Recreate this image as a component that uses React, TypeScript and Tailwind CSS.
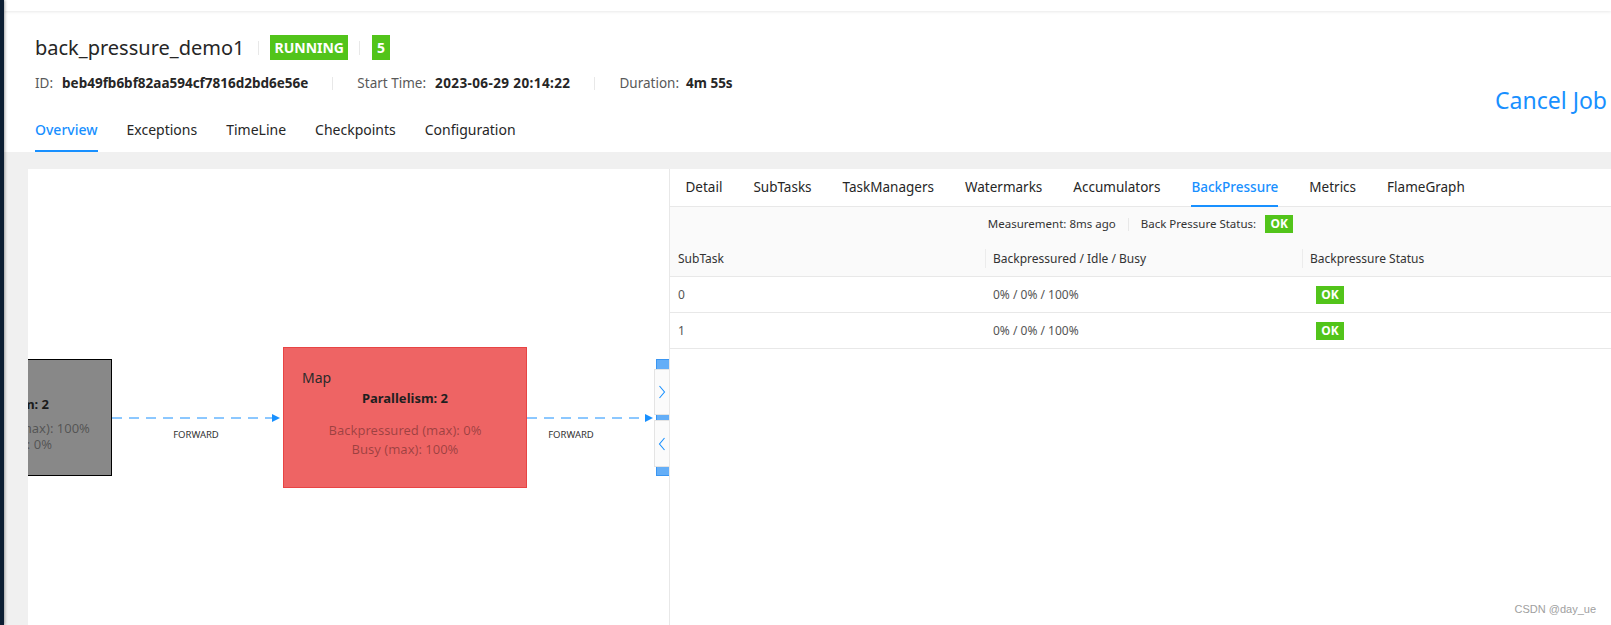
import React from 'react';

const jobTabs = ['Overview', 'Exceptions', 'TimeLine', 'Checkpoints', 'Configuration'];
const vertexTabs = ['Detail', 'SubTasks', 'TaskManagers', 'Watermarks', 'Accumulators', 'BackPressure', 'Metrics', 'FlameGraph'];
const subtasks = [
  { id: 0, ratio: '0% / 0% / 100%', status: 'OK' },
  { id: 1, ratio: '0% / 0% / 100%', status: 'OK' },
];

const Divider = ({ className = '' }: { className?: string }) => (
  <span className={`inline-block w-px shrink-0 bg-[#e8e8e8] ${className}`} />
);

const OkTag = ({ className = '' }: { className?: string }) => (
  <span className={`inline-flex items-center justify-center w-[28px] h-[18px] bg-[#52c41a] text-white text-[12px] font-bold leading-none ${className}`}>
    OK
  </span>
);

function JobHeader() {
  return (
    <div className="bg-white pl-[31px] pr-[4px]">
      <div className="flex justify-between h-[82px]">
        <div className="pt-[24px]">
          {/* title + status */}
          <div className="flex items-center h-[25px]">
            <h1 className="text-[20px] leading-[25px] font-normal text-[#262626]">back_pressure_demo1</h1>
            <Divider className="h-[14px] ml-[14px] mr-[11px]" />
            <span className="h-[25px] px-[4px] bg-[#52c41a] text-white text-[14px] font-bold leading-[25px]">RUNNING</span>
            <Divider className="h-[14px] ml-[11px] mr-[12px]" />
            <span className="h-[25px] w-[18px] bg-[#52c41a] text-white text-[14px] font-bold leading-[25px] text-center">5</span>
          </div>

          {/* id / time / duration */}
          <div className="mt-[13px] flex items-center h-[20px] text-[13.5px] leading-[20px]">
            <span className="text-[#595959]">ID:</span>
            <span className="ml-[9px] font-bold text-[#262626]">beb49fb6bf82aa594cf7816d2bd6e56e</span>
            <Divider className="h-[13px] mx-[24px]" />
            <span className="text-[#595959]">Start Time:</span>
            <span className="ml-[9px] font-bold text-[#262626] tracking-[0.4px]">2023-06-29 20:14:22</span>
            <Divider className="h-[13px] mx-[24px]" />
            <span className="text-[#595959]">Duration:</span>
            <span className="ml-[7px] font-bold text-[#262626]">4m 55s</span>
          </div>
        </div>
        <button className="self-start shrink-0 mt-[74px] text-[23px] leading-[30px] text-[#1890ff]">Cancel Job</button>
      </div>

      <nav className="mt-[14px] flex gap-[29px] h-[45px]">
        {jobTabs.map((t, i) => (
          <div
            key={t}
            className={`relative flex items-center h-full text-[14px] ${i === 0 ? 'text-[#1890ff] font-medium' : 'text-[#262626]'}`}
          >
            {t}
            {i === 0 && <span className="absolute left-0 right-0 bottom-0 h-[2px] bg-[#1890ff]" />}
          </div>
        ))}
      </nav>
    </div>
  );
}

function Chevron({ dir }: { dir: 'right' | 'left' }) {
  return (
    <svg width="8" height="14" viewBox="0 0 8 14" fill="none">
      <polyline
        points={dir === 'right' ? '1.5,1 6.5,7 1.5,13' : '6.5,1 1.5,7 6.5,13'}
        stroke="#1890ff"
        strokeWidth="1.1"
      />
    </svg>
  );
}

function JobGraph() {
  return (
    <div className="relative w-[641px] h-full shrink-0 overflow-hidden bg-white">
      {/* edges */}
      <svg className="absolute left-0 top-0" width="641" height="456">
        <line x1="84" y1="249" x2="245" y2="249" stroke="#1890ff" strokeWidth="1" strokeDasharray="10 7" />
        <polygon points="244,245 252,249 244,253" fill="#1890ff" />
        <line x1="499" y1="249" x2="618" y2="249" stroke="#1890ff" strokeWidth="1" strokeDasharray="10 7" />
        <polygon points="617,245 625,249 617,253" fill="#1890ff" />
        <text x="168" y="269" textAnchor="middle" fontSize="9.5" fill="#333" fontFamily="Noto Sans, sans-serif">FORWARD</text>
        <text x="543" y="269" textAnchor="middle" fontSize="9.5" fill="#333" fontFamily="Noto Sans, sans-serif">FORWARD</text>
      </svg>

      {/* source node (partly off canvas) */}
      <div className="absolute left-[-128px] top-[190px] w-[212px] h-[117px] bg-[#888888] border border-black flex flex-col items-center pt-[36px]">
        <div className="text-[13px] leading-[16px] font-bold text-[#1a1a1a]">Parallelism: 2</div>
        <div className="mt-[8px] text-[13px] leading-[16px] text-black/40">Backpressured (max): 100%</div>
        <div className="text-[13px] leading-[16px] text-black/40">Busy (max): 0%</div>
      </div>

      {/* map node */}
      <div className="absolute left-[255px] top-[178px] w-[244px] h-[141px] bg-[#ee6464] border border-[#e84444]">
        <div className="pt-[21px] pl-[18px] text-[14px] leading-[18px] text-[#2b2b2b]">Map</div>
        <div className="mt-[3px] text-center text-[13px] leading-[16px] font-bold text-[#1f1f1f]">Parallelism: 2</div>
        <div className="mt-[15px] text-center text-[13px] leading-[19px] text-black/35">Backpressured (max): 0%</div>
        <div className="text-center text-[13px] leading-[19px] text-black/35">Busy (max): 100%</div>
      </div>

      {/* sink node (partly hidden) with toggle buttons */}
      <div className="absolute left-[628px] top-[190px] w-[40px] h-[117px] bg-[#64aef7] border border-[#3a96f2]" />
      <div className="absolute left-[626px] top-[200px] w-[16px] h-[46px] bg-[#fbfbfb] border border-[#e4e4e4] flex items-center justify-center">
        <Chevron dir="right" />
      </div>
      <div className="absolute left-[626px] top-[251px] w-[16px] h-[47px] bg-[#fbfbfb] border border-[#e4e4e4] flex items-center justify-center">
        <Chevron dir="left" />
      </div>
    </div>
  );
}

function BackPressurePanel() {
  return (
    <div className="flex-1 min-w-0 flex flex-col border-l border-[#e8e8e8]">
      <div className="flex h-[38px] border-b border-[#e8e8e8]">
        {vertexTabs.map((t) => {
          const active = t === 'BackPressure';
          return (
            <div key={t} className="px-[15.5px] h-full">
              <div
                className={`relative flex items-center h-full text-[13.5px] ${active ? 'text-[#1890ff] font-medium' : 'text-[#262626]'}`}
              >
                {t}
                {active && <span className="absolute left-0 right-0 bottom-[-1px] h-[2px] bg-[#1890ff]" />}
              </div>
            </div>
          );
        })}
      </div>

      <div className="h-[34px] bg-[#fafafa] flex items-center justify-center text-[11.5px] text-[#333]">
        <span>Measurement: 8ms ago</span>
        <Divider className="h-[13px] mx-[12px]" />
        <span>Back Pressure Status:</span>
        <OkTag className="ml-[9px]" />
      </div>

      <div className="grid grid-cols-[315px_317px_1fr] h-[36px] bg-[#fafafa] border-b border-[#e8e8e8] text-[12px] text-[#333]">
        <div className="flex items-center px-2">SubTask</div>
        <div className="relative flex items-center px-2">
          <span className="absolute left-0 top-[8px] h-[19px] w-px bg-[#ececec]" />
          Backpressured / Idle / Busy
        </div>
        <div className="relative flex items-center px-2">
          <span className="absolute left-0 top-[8px] h-[19px] w-px bg-[#ececec]" />
          Backpressure Status
        </div>
      </div>

      {subtasks.map((s) => (
        <div key={s.id} className="grid grid-cols-[315px_317px_1fr] h-[36px] border-b border-[#e8e8e8] text-[12px] text-[#555]">
          <div className="flex items-center px-2">{s.id}</div>
          <div className="flex items-center px-2">{s.ratio}</div>
          <div className="flex items-center px-2">
            <OkTag className="ml-[6px]" />
          </div>
        </div>
      ))}
    </div>
  );
}

export default function App() {
  return (
    <div className="relative w-[1611px] h-[625px] overflow-hidden flex bg-[#f0f0f0] font-['Noto_Sans',sans-serif]">
      <div className="relative z-20 w-[4px] shrink-0 bg-[#0c1e33] shadow-[1px_0_3px_rgba(0,0,0,0.35)]" />

      <div className="flex-1 min-w-0 flex flex-col h-full">
        <div className="relative z-10 h-[11px] shrink-0 bg-white shadow-[0_1px_3px_rgba(0,0,0,0.09)]" />
        <JobHeader />

        <div className="flex-1 min-h-0 flex pt-[17px] pl-[24px]">
          <div className="flex-1 min-w-0 flex bg-white">
            <JobGraph />
            <BackPressurePanel />
          </div>
        </div>
      </div>

      <div className="absolute right-[15px] bottom-[9px] text-[11px] leading-[13px] text-[#a0a0a0] font-['Liberation_Sans',sans-serif]">
        CSDN @day_ue
      </div>
    </div>
  );
}
